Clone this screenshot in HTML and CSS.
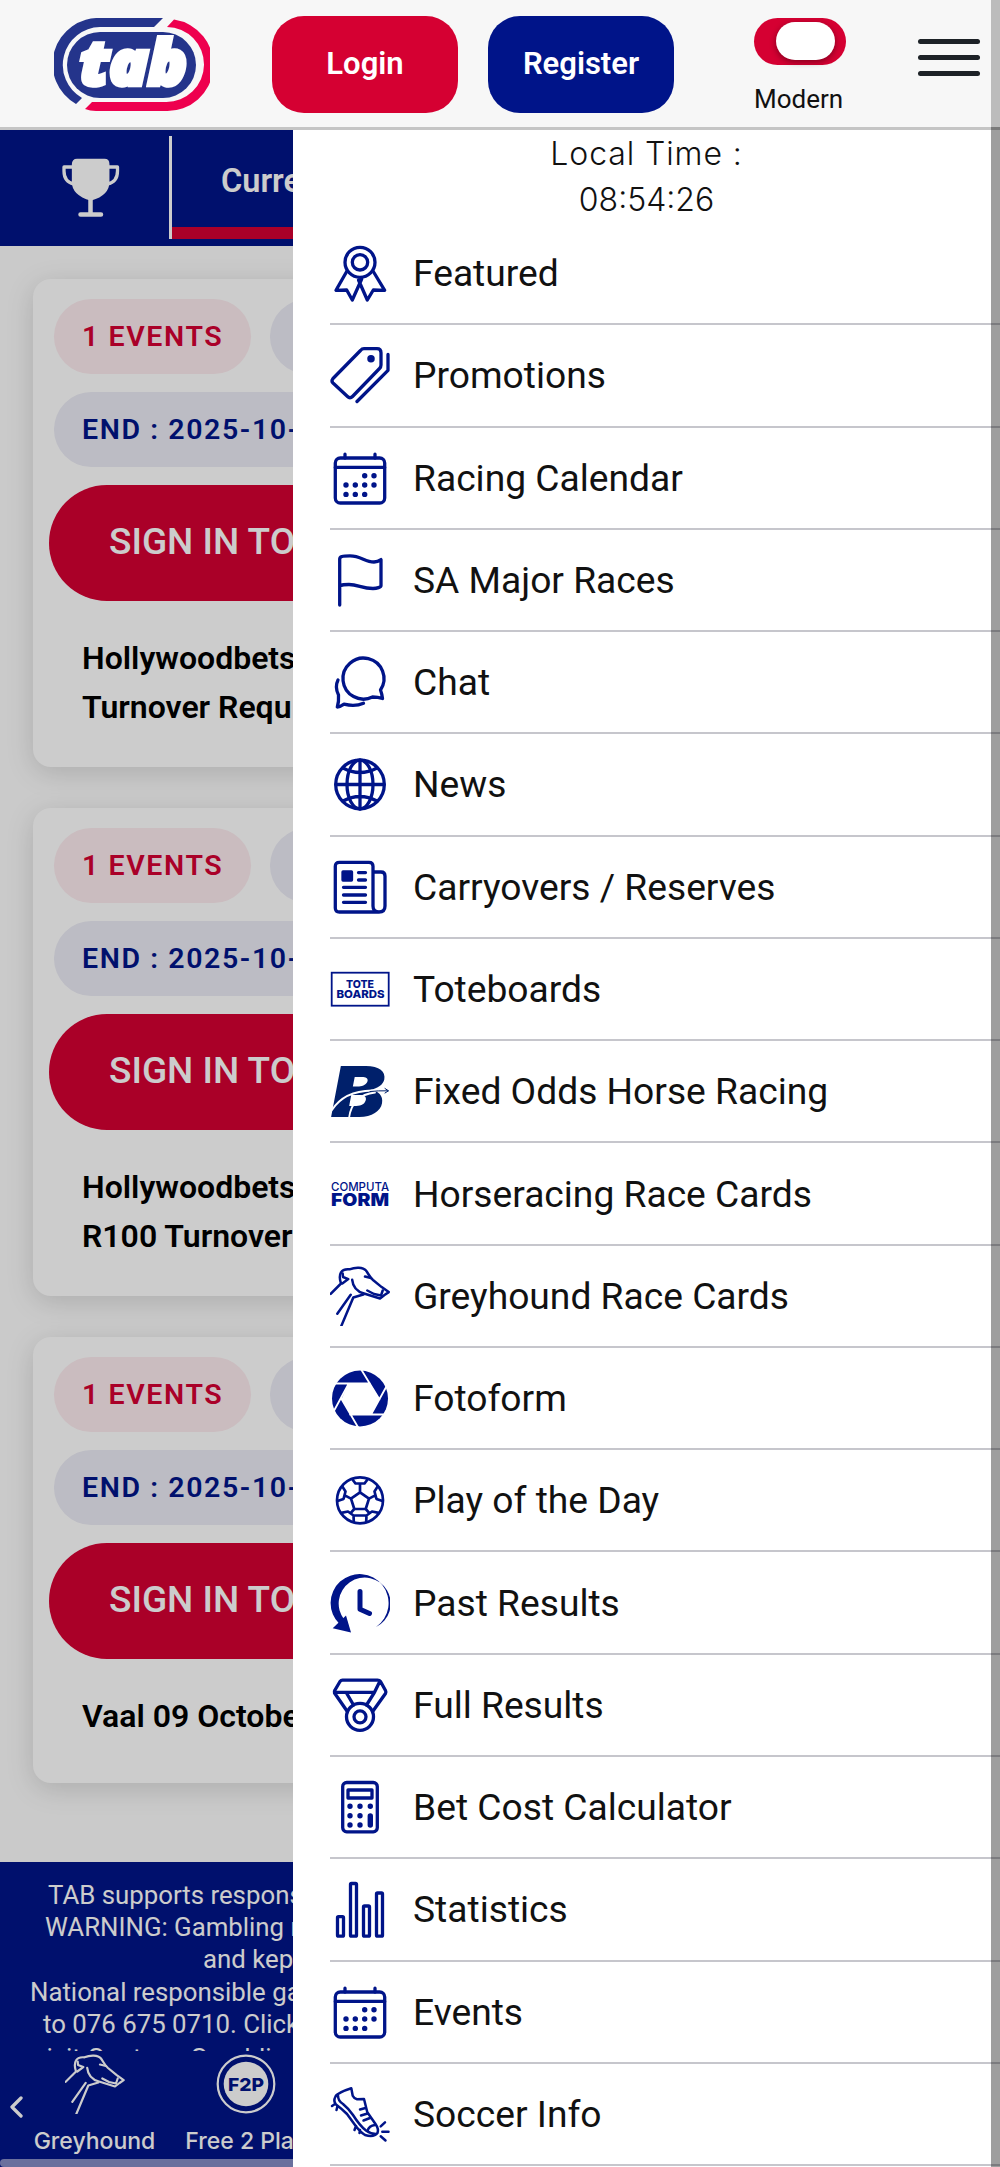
FILE: index.html
```html
<!DOCTYPE html>
<html lang="en">
<head>
    <meta charset="UTF-8">
    <meta name="viewport" content="width=device-width, initial-scale=1.0">
    <title>TAB</title>
    <link rel="stylesheet" href="styles.css">
</head>
<body>
    <!-- shared icons -->
    <svg class="defs">
        <symbol id="calendar" viewBox="0 0 60 60">
            <rect x="5.3" y="10" width="49.4" height="45" rx="5"/>
            <path d="M5.3 19.4H54.7M15 10V6.2M45 10V6.2"/>
            <path class="dots" d="M34.7 27.7h0M44 27.7h0M16 37h0M25.3 37h0M34.7 37h0M44 37h0M16 46.4h0M25.3 46.4h0M34.7 46.4h0"/>
        </symbol>
        <symbol id="greyhound" viewBox="0 0 60 60">
            <path d="M.7 27.8L11 17.5C9.5 13 9.5 9 11 6.5C12.5 3.5 16 3 19.5 3.3C25 1 33 .8 36 4.5C38.5 8 39.5 11 43 14L51.7 21.1L58.7 26.1L54.5 29L50 32.5L34 27.5C27 25.5 23 22 22.2 13.8"/>
            <path d="M12.7 7.5L13 11L18.3 13.1L12.3 17.5M35 10.5L41 12M37.3 24.5L44 28L51 29.5L52.7 24.5M33.3 28.5L23.3 31.5L11.3 60M20.7 28.8L7.3 47.8"/>
        </symbol>
    </svg>

    <header class="header">
        <svg class="logo" viewBox="0 0 156 94">
            <path class="logo-blue" d="M109 0H47A46 46 0 0 0 22 86L28 80A38 38 0 0 1 46 9H100Z"/>
            <path class="logo-red" d="M120 1.5A46 46 0 0 1 112 93H42Q36 93 31 91L38 84H112A37.5 37.5 0 0 0 113 9Z"/>
            <rect class="logo-blue" x="13" y="14" width="129" height="66" rx="33"/>
            <text class="logo-text" x="26" y="67" textLength="107" lengthAdjust="spacingAndGlyphs">tab</text>
        </svg>
        <button class="btn btn-login">Login</button>
        <button class="btn btn-register">Register</button>
        <div class="mode">
            <div class="switch"><span class="knob"></span></div>
            <span>Modern</span>
        </div>
        <div class="burger"><i></i><i></i><i></i></div>
    </header>

    <div class="page">
        <div class="tabs">
            <div class="tab-icon">
                <svg viewBox="0 0 60 60">
                    <path class="fill" d="M12.5 6Q12.500 2.500 16 2.500H43.500Q46.800 2.500 46.800 6V24Q46.800 36 30 41Q12.500 36 12.500 24Z"/>
                    <path d="M12 9H3V13Q3 24 13 26M48 9H56.5V13Q56.5 24 46.5 26"/>
                    <path class="stand" d="M29.500 40V56M19.500 56.500H40"/>
                </svg>
            </div>
            <div class="tab">Current</div>
        </div>

        <div class="cards">
            <div class="card">
                <div class="pills"><span class="pill red">1 EVENTS</span><span class="pill wide"></span></div>
                <div class="pills"><span class="pill">END : 2025-10-</span></div>
                <div class="sign-in">SIGN IN TO</div>
                <p>Hollywoodbets<br>Turnover Requ</p>
            </div>
            <div class="card">
                <div class="pills"><span class="pill red">1 EVENTS</span><span class="pill wide"></span></div>
                <div class="pills"><span class="pill">END : 2025-10-</span></div>
                <div class="sign-in">SIGN IN TO</div>
                <p>Hollywoodbets<br>R100 Turnover</p>
            </div>
            <div class="card">
                <div class="pills"><span class="pill red">1 EVENTS</span><span class="pill wide"></span></div>
                <div class="pills"><span class="pill">END : 2025-10-</span></div>
                <div class="sign-in">SIGN IN TO</div>
                <p>Vaal 09 October</p>
            </div>
        </div>

        <footer class="footer">
            <div class="notice">
                <div class="l1">TAB supports respons</div>
                <div class="l2">WARNING: Gambling m</div>
                <div class="l3">and kept</div>
                <div class="l4">National responsible ga</div>
                <div class="l5">to 076 675 0710. Click</div>
                <div class="l6">visit Gauteng Gambling</div>
            </div>
            <div class="bottom-nav">
                <svg class="prev" viewBox="0 0 14 22"><path d="M12 2L3 11L12 20"/></svg>
                <div class="nav-item">
                    <svg viewBox="0 0 60 60"><use href="#greyhound"/></svg>
                    <span>Greyhound</span>
                </div>
                <div class="nav-item">
                    <svg viewBox="0 0 60 60">
                        <circle cx="30" cy="30" r="28.3"/>
                        <circle class="disc" cx="30" cy="30" r="22.3"/>
                        <text x="30" y="36.5" textLength="36" lengthAdjust="spacingAndGlyphs">F2P</text>
                    </svg>
                    <span>Free 2 Play</span>
                </div>
            </div>
            <div class="scroll-x"></div>
        </footer>
    </div>
    <div class="overlay"></div>

    <nav class="drawer">
        <div class="clock">Local Time :<br><span>08:54:26</span></div>
        <ul class="menu">
            <li>
                <svg viewBox="0 0 60 60"><circle cx="30" cy="19.3" r="15"/><circle cx="30" cy="19.3" r="7.7"/><path d="M16.7 28.5L6 47.3L16.7 47L22.3 57L31.7 36M28.5 37L37.3 57L43.3 47L54.7 47.3L43.3 28.5"/></svg>
                <span>Featured</span>
            </li>
            <li>
                <svg viewBox="0 0 60 60"><path d="M34 3.7H47Q51 3.7 51 7.7V20Q51 22 49.5 23.5L22.5 51.5Q20 54 17.5 51.5L3 38Q1 36 3 33.5L30.5 5.5Q32 3.7 34 3.7ZM58 9.5V25.3L27 56.5"/><circle class="fill" cx="41" cy="13.7" r="2.1"/></svg>
                <span>Promotions</span>
            </li>
            <li><svg viewBox="0 0 60 60"><use href="#calendar"/></svg><span>Racing Calendar</span></li>
            <li>
                <svg viewBox="0 0 60 60"><path d="M9.7 55V9C9.7 6.5 12 5.9 20 5.9C31 5.9 35 12 44 12C47 12 49 11 51 9.6V35.5C51 37.3 47 38.5 43 38.5C32 38.5 28 34.5 19 34.5C14 34.5 12 34.8 9.7 35.8"/></svg>
                <span>SA Major Races</span>
            </li>
            <li>
                <svg viewBox="0 0 60 60"><path d="M50.5 38A20.5 20.5 0 1 0 42.5 45Q48 45 52.5 46.5Q52 42 50.5 38ZM8 28Q4.5 35 8.5 43Q9 50 7.3 55Q10 55 14 52.2Q25 55 33.5 51.3"/></svg>
                <span>Chat</span>
            </li>
            <li>
                <svg viewBox="0 0 60 60"><circle cx="30" cy="30.5" r="24.3"/><ellipse cx="30" cy="30.5" rx="13" ry="24.3"/><path d="M30 6V55M6 30.5H54M13 14Q30 23 47 14M13 47Q30 38 47 47"/></svg>
                <span>News</span>
            </li>
            <li>
                <svg viewBox="0 0 60 60"><path d="M49 55H9.3Q5.3 55 5.3 51V9.3Q5.3 5.3 9.3 5.3H39Q43 5.3 43 9.3V49Q43 55 49 55T55 49V19Q55 15 51 15H43M28.5 15.6H35.5M28.5 23H35.5M13.5 30.3H35.5M13.5 38H35.5M13.5 45.3H35.5"/><rect class="fill" x="13" y="15" width="8.5" height="8"/></svg>
                <span>Carryovers / Reserves</span>
            </li>
            <li>
                <svg class="text-icon" viewBox="0 0 60 60"><rect x="1.7" y="13.7" width="57" height="33"/><text x="16" y="28.7" font-size="10.8" textLength="28" lengthAdjust="spacingAndGlyphs">TOTE</text><text x="6.500" y="38.9" font-size="10.8" textLength="48" lengthAdjust="spacingAndGlyphs">BOARDS</text></svg>
                <span>Toteboards</span>
            </li>
            <li>
                <svg class="bet-icon" viewBox="0 0 60 60"><text x="1" y="55.7" textLength="54" lengthAdjust="spacingAndGlyphs">B</text><path class="gap" d="M2 49Q14 30 42 29.5H53M19 57Q22 34 45 31.5"/><path class="plane" d="M40 30.500Q48 29.600 58 29.8M55 27.5L58.5 29.8L55 32"/></svg>
                <span>Fixed Odds Horse Racing</span>
            </li>
            <li>
                <svg class="text-icon" viewBox="0 0 60 60"><text class="light" x="1" y="26.7" font-size="11.8" textLength="58" lengthAdjust="spacingAndGlyphs">COMPUTA</text><text class="heavy" x="1" y="42" font-size="17.5" textLength="58" lengthAdjust="spacingAndGlyphs">FORM</text></svg>
                <span>Horseracing Race Cards</span>
            </li>
            <li><svg class="thin" viewBox="0 0 60 60"><use href="#greyhound"/></svg><span>Greyhound Race Cards</span></li>
            <li>
                <svg viewBox="0 0 60 60"><circle class="blade" cx="30" cy="30.5" r="28"/><path class="hole" d="M18.5 15.5H40L49.5 31L41 46.5H20.5L11.5 31Z"/><path class="gap" d="M5 15.5H40M31.5 2L49.5 31.5M57.5 16.5L41 46.5M55 46.5H20M28.5 60L11.5 31M2.5 45.5L18.5 16"/></svg>
                <span>Fotoform</span>
            </li>
            <li>
                <svg class="ball" viewBox="0 0 60 60"><circle cx="30" cy="30.3" r="23"/><path d="M30 22.3L39 28.6L35.7 39H24.3L21 28.6ZM30 22.3V14M39 28.6L45.2 25.4M35.7 39L39.4 43.2M24.3 39L20.6 43.2M21 28.6L14.8 25.4M22.3 9.2L25.5 13.5H34.5L37.7 9.2M47.7 16.4L44.5 21.5L46.5 29L52.5 31.1M48.7 42.9L42 41.5L36.5 45.5L36.2 51.9M23.8 51.9L23.5 45.5L18 41.5L11.3 42.9M7.5 31.1L13.5 29L15.5 21.5L12.3 16.4M36.5 45.5H23.5"/></svg>
                <span>Play of the Day</span>
            </li>
            <li>
                <svg viewBox="0 0 60 60"><path class="solid" d="M9.5 51A29 29 0 1 1 46 54A26 26 0 1 0 14.5 47Z"/><path class="solid" d="M2.7 55.2L21 59.6L16 42.6Z"/><path class="hands" d="M30 18.5V36.2L39.5 40.5"/></svg>
                <span>Past Results</span>
            </li>
            <li>
                <svg viewBox="0 0 60 60"><circle cx="30" cy="41.8" r="13.5"/><circle cx="30" cy="41.8" r="6"/><path d="M17 36L4.5 18Q4 16.5 5 15L10 6.5Q11 5.2 12.5 5.2H47.5Q49.5 5.2 50.5 6.5L55.5 15.5Q56.3 17 55.5 18.5L43 36M5 17.3H44.5L50 6M16.5 18L23.5 30M44.5 17.3L36.5 30"/></svg>
                <span>Full Results</span>
            </li>
            <li>
                <svg viewBox="0 0 60 60"><rect x="12.7" y="5.5" width="34.6" height="49.3" rx="4"/><rect x="18" y="13" width="24" height="8"/><path class="dots" d="M20 29.3h0M30 29.3h0M40.3 29.3h0M20 38.7h0M30 38.7h0M20 48h0M30 48h0M40.3 39V48"/></svg>
                <span>Bet Cost Calculator</span>
            </li>
            <li>
                <svg viewBox="0 0 60 60"><rect x="7.5" y="37.7" width="6" height="19.5" rx="1"/><rect x="20.5" y="4.5" width="6" height="52.7" rx="1"/><rect x="33.5" y="27" width="6" height="30.2" rx="1"/><rect x="46.5" y="14" width="6" height="43.2" rx="1"/></svg>
                <span>Statistics</span>
            </li>
            <li><svg viewBox="0 0 60 60"><use href="#calendar"/></svg><span>Events</span></li>
            <li>
                <svg class="thin" viewBox="0 0 60 60"><path d="M21.3 4.3L22.7 11.7Q24 14.5 27 15.2L34 15L37.3 28.3L45.5 40Q49 45 47.5 49Q44 53.5 35 51Q30 48 25 41L17 30Q12 25 6 20.5Q3 17 5.5 12.5Q8 8.5 21.3 4.3ZM8 11.5Q8 17 13 20Q19 25 23 31Q30 42 36 46.5Q41 50 46 50M37.5 47Q39 41.5 45 41M30 25.5L35.5 24M31 31.5L37.5 29.5M33.5 36.5L40 34M5 20L2 22M7.5 22L6.5 26M26 42L24.5 46M30 46L29.5 49M50.7 42.3L55 38.3M52.3 47.7H58.5M50.7 52.3L55.5 56.5"/></svg>
                <span>Soccer Info</span>
            </li>
        </ul>
    </nav>
    <div class="scroll-y"></div>
</body>
</html>
```

FILE: styles.css
```css
* {
    box-sizing: border-box;
}
body {
    margin: 0;
    position: relative;
    height: 2167px;
    overflow: hidden;
    font-family: Roboto, sans-serif;
    background: #fff;
}
svg {
    fill: none;
    stroke: currentColor;
    stroke-width: 3.3;
    stroke-linecap: round;
    stroke-linejoin: round;
}
svg text {
    fill: currentColor;
    stroke: none;
}
.defs {
    position: absolute;
    width: 0;
    height: 0;
}
.header {
    display: flex;
    align-items: flex-start;
    height: 130px;
    padding: 16px 20px 0 54px;
    background: #f7f7f7;
    border-bottom: 3px solid #c5c5c5;
}
.logo {
    width: 156px;
    height: 94px;
    margin: 2px 62px 0 0;
}
.logo path, .logo rect {
    stroke: none;
}
.logo-blue {
    fill: #24348b;
}
.logo-red {
    fill: #ee004e;
}
.logo .logo-text {
    font: italic 800 62px "Open Sans", sans-serif;
    fill: #fff;
    stroke: #fff;
    stroke-width: 4.5;
    stroke-linejoin: miter;
}
.btn {
    width: 186px;
    height: 97px;
    margin-right: 30px;
    padding: 0 0 2px;
    border: none;
    border-radius: 32px;
    color: #fff;
    font: 600 31px Roboto, sans-serif;
}
.btn-login {
    background: #d50032;
}
.btn-register {
    background: #001489;
    margin-right: 80px;
}
.mode {
    width: 92px;
    margin-top: 2px;
    font-size: 26px;
    line-height: 30px;
    color: #111;
}
.switch {
    display: flex;
    justify-content: flex-end;
    height: 47px;
    margin-bottom: 19px;
    padding: 4px 11px 4px 0;
    border-radius: 24px;
    background: #d50032;
}
.knob {
    width: 59px;
    height: 38px;
    border-radius: 19px;
    background: #fff;
    box-shadow: 0 2px 6px rgba(0, 0, 0, 0.4);
}
.burger {
    display: flex;
    flex-direction: column;
    gap: 11px;
    margin: 23px 0 0 auto;
}
.burger i {
    width: 62px;
    height: 5px;
    border-radius: 3px;
    background: #1d2227;
}
/* page under the menu */
.page {
    width: 293px;
    height: 2037px;
    overflow: hidden;
    background: #fdfdfd;
}
.tabs {
    display: flex;
    height: 116px;
    padding-top: 6px;
    color: #fff;
    background: #001489;
}
.tab-icon {
    flex: none;
    width: 172px;
    height: 103px;
    padding: 22px 0 0 61px;
    border-right: 3px solid #fff;
}
.tab-icon svg {
    width: 60px;
    height: 60px;
}
.stand {
    stroke-width: 4.5;
}
.fill {
    fill: currentColor;
}
.tab {
    flex: none;
    width: 250px;
    height: 103px;
    padding-left: 49px;
    border-bottom: 12px solid #d50032;
    font-size: 32.5px;
    font-weight: 600;
    line-height: 91px;
}
.cards {
    display: flex;
    flex-direction: column;
    gap: 41px;
    height: 1616px;
    padding: 33px 0 0 33px;
}
.card {
    width: 930px;
    height: 488px;
    padding: 20px 16px 0 21px;
    border-radius: 18px;
    background: #fff;
    box-shadow: 0 6px 28px rgba(0, 0, 0, 0.15);
}
.card:last-child {
    height: 446px;
}
.pills {
    display: flex;
    gap: 19px;
    margin-bottom: 18px;
}
.pill {
    height: 75px;
    padding: 0 28px;
    border-radius: 38px;
    background: #ebebf5;
    color: #001489;
    font-size: 28.5px;
    font-weight: 600;
    letter-spacing: 1.6px;
    line-height: 75px;
}
.pill.red {
    background: #fdebef;
    color: #d50032;
}
.pill.wide {
    width: 300px;
}
.sign-in {
    width: 880px;
    height: 116px;
    margin-left: -5px;
    padding-left: 60px;
    border-radius: 58px;
    background: #d50032;
    color: #fff;
    font-size: 37px;
    font-weight: 500;
    line-height: 114px;
}
.card p {
    margin: 33px 0 0 28px;
    color: #000;
    font-size: 32px;
    font-weight: 600;
    line-height: 49px;
    white-space: nowrap;
}
.footer {
    height: 305px;
    color: #fff;
    background: #001489;
}
.notice {
    height: 189px;
    padding-top: 17px;
    overflow: hidden;
    font-size: 25.8px;
    line-height: 32.2px;
    white-space: nowrap;
}
.l1 { padding-left: 48px; }
.l2 { padding-left: 45px; }
.l3 { padding-left: 203px; }
.l4 { padding-left: 30px; }
.l5 { padding-left: 43px; }
.l6 { padding: 2px 0 0 34px; }
.bottom-nav {
    display: flex;
    height: 108px;
    padding: 3px 0 0 9px;
}
.prev {
    width: 14px;
    height: 22px;
    margin-top: 42px;
    flex: none;
}
.nav-item {
    display: flex;
    flex: none;
    flex-direction: column;
    align-items: center;
    width: 143px;
    font: 500 23px/30px Inter, sans-serif;
}
.nav-item + .nav-item {
    width: 160px;
}
.nav-item svg {
    width: 60px;
    height: 60px;
    margin-bottom: 12px;
    stroke-width: 2.2;
}
.nav-item text {
    text-anchor: middle;
    font: 800 18px Inter, sans-serif;
    fill: #001489;
}
.disc {
    fill: #fff;
    stroke: none;
}
.scroll-x {
    height: 8px;
    border-radius: 4px 0 0 4px;
    background: #858cc5;
}
.overlay {
    position: absolute;
    top: 130px;
    left: 0;
    width: 293px;
    height: 2037px;
    background: rgba(0, 0, 0, 0.2);
}
/* side menu */
.drawer {
    position: absolute;
    top: 130px;
    left: 293px;
    width: 707px;
    height: 2037px;
    background: #fff;
}
.clock {
    height: 93px;
    padding-top: 1px;
    color: #111;
    font: 300 32px/46px Inter, sans-serif;
    letter-spacing: 0.9px;
    text-align: center;
}
.clock span {
    letter-spacing: 0;
}
.menu {
    margin: 0;
    padding: 0 0 0 37px;
    list-style: none;
}
.menu li {
    display: flex;
    align-items: center;
    height: 102.28px;
    border-bottom: 2px solid #c6c6cc;
    color: #111;
    font-size: 37.2px;
}
.menu svg {
    width: 60px;
    height: 60px;
    margin-right: 23px;
    color: #001489;
}
.menu .thin {
    stroke-width: 2.5;
}
.menu .ball {
    stroke-width: 2.7;
}
.dots {
    stroke-width: 5.4;
}
.text-icon {
    stroke-width: 1.8;
    stroke-linejoin: miter;
    font-family: Inter, sans-serif;
    font-weight: 800;
}
.light {
    font-weight: 500;
}
.heavy {
    font-weight: 900;
}
.menu .bet-icon {
    color: #00206b;
    font: italic 900 70.5px Inter, sans-serif;
}
.gap {
    stroke: #fff;
    stroke-width: 1.8;
}
.plane {
    stroke-width: 1;
}
.blade, .solid {
    fill: currentColor;
    stroke: none;
}
.hole {
    fill: #fff;
    stroke: none;
}
.hands {
    stroke-width: 5;
}
/* scrollbar */
.scroll-y {
    position: absolute;
    top: 0;
    right: 0;
    width: 9px;
    height: 2167px;
    background: linear-gradient(rgba(0, 0, 0, 0.24) 127px, rgba(0, 0, 0, 0.38) 127px);
}
```
